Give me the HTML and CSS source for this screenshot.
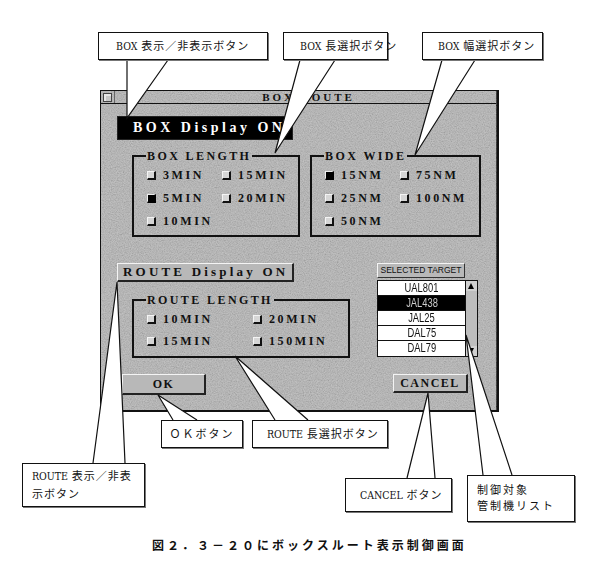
FILE: index.html
```html
<!DOCTYPE html>
<html lang="ja">
<head>
    <meta charset="UTF-8">
    <meta name="viewport" content="width=device-width, initial-scale=1.0">
    <title>BOX ROUTE</title>
    <link rel="stylesheet" href="styles.css">
</head>
<body>
<figure class="figure">
    <div class="canvas">

        <!-- BOX ROUTE window -->
        <div class="dialog">
            <svg class="grain" width="396" height="319">
                <filter id="speckle">
                    <feTurbulence type="fractalNoise" baseFrequency="0.85" numOctaves="2" seed="7"/>
                    <feColorMatrix type="matrix" values="1 0 0 0 0  1 0 0 0 0  1 0 0 0 0  0 0 0 0 0.28"/>
                </filter>
                <rect width="396" height="319" filter="url(#speckle)"/>
            </svg>

            <div class="titlebar">
                <span class="close-cell"><span class="close-box"></span></span>
                <span class="title">BOX ROUTE</span>
            </div>

            <div class="dialog-body">
                <button class="btn-display">BOX Display ON</button>

                <div class="group-row">
                    <fieldset class="group box-length">
                        <legend>BOX LENGTH</legend>
                        <div class="opts">
                            <label class="check"><span class="cb"></span>3MIN</label>
                            <label class="check"><span class="cb"></span>15MIN</label>
                            <label class="check"><span class="cb checked"></span>5MIN</label>
                            <label class="check"><span class="cb"></span>20MIN</label>
                            <label class="check"><span class="cb"></span>10MIN</label>
                        </div>
                    </fieldset>

                    <fieldset class="group box-wide">
                        <legend>BOX WIDE</legend>
                        <div class="opts">
                            <label class="check"><span class="cb checked"></span>15NM</label>
                            <label class="check"><span class="cb"></span>75NM</label>
                            <label class="check"><span class="cb"></span>25NM</label>
                            <label class="check"><span class="cb"></span>100NM</label>
                            <label class="check"><span class="cb"></span>50NM</label>
                        </div>
                    </fieldset>
                </div>

                <div class="route-row">
                    <div class="route-col">
                        <button class="btn btn-route">ROUTE Display ON</button>
                        <fieldset class="group route-length">
                            <legend>ROUTE LENGTH</legend>
                            <div class="opts">
                                <label class="check"><span class="cb"></span>10MIN</label>
                                <label class="check"><span class="cb"></span>20MIN</label>
                                <label class="check"><span class="cb"></span>15MIN</label>
                                <label class="check"><span class="cb"></span>150MIN</label>
                            </div>
                        </fieldset>
                    </div>

                    <div class="target">
                        <div class="target-head">SELECTED TARGET</div>
                        <div class="target-list">
                            <ul class="rows">
                                <li><span>UAL801</span></li>
                                <li class="sel"><span>JAL438</span></li>
                                <li><span>JAL25</span></li>
                                <li><span>DAL75</span></li>
                                <li><span>DAL79</span></li>
                            </ul>
                            <div class="scrollbar">
                                <span class="arrow up"></span>
                                <span class="track"></span>
                                <span class="arrow down"></span>
                            </div>
                        </div>
                    </div>
                </div>

                <div class="action-row">
                    <button class="btn btn-ok">OK</button>
                    <button class="btn btn-cancel">CANCEL</button>
                </div>
            </div>
        </div>

        <!-- callout pointers -->
        <svg class="pointers" width="600" height="537" viewBox="0 0 600 537">
            <g fill="#fff">
                <polygon points="127,60 168,60 127,118"/>
                <polygon points="300,60 335,60 275,153"/>
                <polygon points="442,60 475,60 415,155"/>
                <polygon points="117,282 93,463 125,463"/>
                <polygon points="158,395 173,420 197,420"/>
                <polygon points="235,356 275,420 308,420"/>
                <polygon points="428,393 407,478 435,478"/>
                <polygon points="466,335 483,475 512,475"/>
            </g>
            <g fill="none" stroke="#111" stroke-width="1.2">
                <polyline points="127,60 127,118 168,60"/>
                <polyline points="300,60 275,153 335,60"/>
                <polyline points="442,60 415,155 475,60"/>
                <polyline points="93,463 117,282 125,463"/>
                <polyline points="173,420 158,395 197,420"/>
                <polyline points="275,420 235,356 308,420"/>
                <polyline points="407,478 428,393 435,478"/>
                <polyline points="483,475 466,335 512,475"/>
            </g>
        </svg>

        <div class="callout c-box-display"><span class="lat">BOX</span> 表示／非表示ボタン</div>
        <div class="callout c-box-length"><span class="lat">BOX</span> 長選択ボタン</div>
        <div class="callout c-box-wide"><span class="lat">BOX</span> 幅選択ボタン</div>
        <div class="callout c-route-display"><span class="lat">ROUTE</span> 表示／非表<br>示ボタン</div>
        <div class="callout c-ok">ＯＫボタン</div>
        <div class="callout c-route-length"><span class="lat">ROUTE</span> 長選択ボタン</div>
        <div class="callout c-cancel"><span class="lat">CANCEL</span> ボタン</div>
        <div class="callout c-target">制御対象<br>管制機リスト</div>
    </div>

    <figcaption class="caption">図２．３－２０にボックスルート表示制御画面</figcaption>
</figure>
</body>
</html>
```

FILE: styles.css
```css
* {
    margin: 0;
    padding: 0;
    box-sizing: border-box;
}

body {
    background: #fff;
    color: #111;
    font-family: "Liberation Serif", "Noto Sans CJK JP", serif;
}

.figure {
    width: 600px;
    height: 561px;
}

.canvas {
    position: relative;
    width: 600px;
    height: 537px;
}

/* window */
.dialog {
    position: absolute;
    left: 100px;
    top: 90px;
    width: 399px;
    height: 322px;
    background: #b2b2b2;
    border: 1px solid #111;
    border-right-width: 3px;
    border-bottom-width: 2px;
    z-index: 1;
}

/* halftone speckle behind the controls */
.grain {
    position: absolute;
    left: 0;
    top: 0;
    pointer-events: none;
}

.titlebar,
.dialog-body {
    position: relative;
}

.titlebar {
    display: flex;
    height: 13px;
    border-bottom: 1px solid #111;
}

.close-cell {
    width: 14px;
    display: flex;
    align-items: center;
    justify-content: center;
    border-right: 1px solid #666;
}

.close-box {
    width: 9px;
    height: 9px;
    border: 1px solid #444;
    background: #c8c8c8;
    box-shadow: inset 2px 2px 0 #e8e8e8;
}

.title {
    flex: 1;
    text-align: center;
    font-size: 11px;
    font-weight: bold;
    line-height: 12px;
    letter-spacing: 3px;
    padding-left: 6px;
}

.dialog-body {
    padding: 12px 0 0 16px;
}

button {
    font-family: inherit;
    color: #111;
    cursor: pointer;
}

.btn-display {
    display: block;
    width: 176px;
    height: 24px;
    background: #000;
    color: #fff;
    border: 1px solid #222;
    font-size: 14px;
    font-weight: bold;
    letter-spacing: 3.5px;
    text-align: left;
    padding-left: 15px;
}

.btn {
    height: 20px;
    background: #b8b8b8;
    border: 2px solid;
    border-color: #f4f4f4 #222 #222 #f4f4f4;
    border-width: 1px 2px 2px 1px;
    font-size: 12px;
    font-weight: bold;
    letter-spacing: 1.5px;
}

.btn-route {
    display: block;
    width: 177px;
    height: 19px;
    font-size: 13px;
    letter-spacing: 3.2px;
    text-align: left;
    padding-left: 5px;
}

/* group boxes */
.group-row {
    display: flex;
    gap: 10px;
    margin: 9px 0 0 15px;
}

.group {
    min-width: 0;
    border: 2px solid #111;
    padding: 5px 6px 7px 12px;
}

.group legend {
    padding: 0 1px;
    font-size: 12px;
    font-weight: bold;
    line-height: 14px;
    letter-spacing: 2.4px;
}

.box-length {
    width: 168px;
}

.box-wide {
    width: 171px;
}

.opts {
    display: grid;
    grid-template-columns: 75px 75px;
    row-gap: 9px;
    margin-left: 1px;
}

.check {
    display: flex;
    align-items: center;
    gap: 7px;
    height: 14px;
    font-size: 12px;
    font-weight: bold;
    letter-spacing: 2.6px;
    white-space: nowrap;
}

.cb {
    flex: none;
    width: 9px;
    height: 9px;
    background: #d6d6d6;
    border: 1px solid;
    border-color: #f4f4f4 #111 #111 #f4f4f4;
    border-width: 1px 2px 2px 1px;
}

.cb.checked {
    background: #000;
    border-color: #eee #000 #000 #eee;
}

.route-row {
    display: flex;
    gap: 27px;
    margin-top: 26px;
}

.route-length {
    width: 218px;
    margin: 11px 0 0 15px;
    padding-bottom: 8px;
}

.route-length .opts {
    grid-template-columns: 106px 106px;
    row-gap: 8px;
}

/* target list */
.target-head {
    width: 88px;
    height: 15px;
    background: #b8b8b8;
    border: 1px solid;
    border-color: #f4f4f4 #333 #333 #f4f4f4;
    font-family: "Liberation Sans", sans-serif;
    font-size: 8.5px;
    line-height: 13px;
    text-align: center;
    white-space: nowrap;
    margin-bottom: 2px;
}

.target-list {
    display: flex;
    width: 101px;
    border: 1px solid #111;
    background: #fff;
}

.rows {
    list-style: none;
    width: 88px;
}

.rows li {
    height: 15px;
    border-bottom: 1px solid #111;
    text-align: center;
    font-family: "Liberation Sans", sans-serif;
    font-size: 13px;
    line-height: 14px;
}

.rows li:last-child {
    border-bottom: none;
}

.rows li span {
    display: inline-block;
    transform: scaleX(0.72);
}

.rows li.sel {
    background: #000;
    color: #ccc;
}

.scrollbar {
    display: flex;
    flex-direction: column;
    width: 12px;
    border-left: 1px solid #111;
    background: #bdbdbd;
}

.scrollbar .track {
    flex: 1;
}

.arrow {
    height: 10px;
    position: relative;
    background: #d0d0d0;
}

.arrow::after {
    content: "";
    position: absolute;
    left: 2px;
    border-left: 3.5px solid transparent;
    border-right: 3.5px solid transparent;
}

.arrow.up::after {
    top: 2px;
    border-bottom: 6px solid #000;
}

.arrow.down::after {
    top: 2px;
    border-top: 6px solid #000;
}

.action-row {
    display: flex;
    justify-content: space-between;
    margin-top: 16px;
    padding: 0 28px 0 5px;
}

.btn-ok {
    width: 84px;
    height: 21px;
}

.btn-cancel {
    width: 75px;
    height: 19px;
}

/* pointers and labels */
.pointers {
    position: absolute;
    left: 0;
    top: 0;
    z-index: 2;
}

.callout {
    position: absolute;
    z-index: 3;
    background: #fff;
    border: 1px solid #111;
    box-shadow: 1px 1px 0 #777;
    font-size: 11px;
    letter-spacing: 1px;
    line-height: 26px;
    white-space: nowrap;
}

.callout .lat {
    font-family: "DejaVu Serif Condensed", "DejaVu Serif", serif;
    font-stretch: condensed;
    font-size: 10.5px;
    letter-spacing: 0;
}

.c-box-display {
    left: 98px;
    top: 32px;
    width: 170px;
    height: 28px;
    padding-left: 17px;
}

.c-box-length {
    left: 283px;
    top: 32px;
    width: 105px;
    height: 28px;
    padding-left: 16px;
}

.c-box-wide {
    left: 422px;
    top: 32px;
    width: 121px;
    height: 28px;
    padding-left: 15px;
}

.c-route-display {
    left: 22px;
    top: 463px;
    width: 123px;
    height: 44px;
    padding: 3px 0 0 9px;
    line-height: 18px;
}

.c-ok {
    left: 161px;
    top: 420px;
    width: 82px;
    height: 28px;
    text-align: center;
    letter-spacing: 2px;
}

.c-route-length {
    left: 252px;
    top: 420px;
    width: 136px;
    height: 28px;
    padding-left: 14px;
}

.c-cancel {
    left: 345px;
    top: 478px;
    width: 107px;
    height: 34px;
    padding-left: 14px;
    line-height: 32px;
}

.c-target {
    left: 467px;
    top: 475px;
    width: 108px;
    height: 47px;
    padding: 6px 0 0 9px;
    line-height: 16px;
    letter-spacing: 2px;
}

.caption {
    padding-left: 152px;
    font-family: "Noto Sans CJK JP", sans-serif;
    font-size: 12px;
    font-weight: bold;
    line-height: 16px;
    letter-spacing: 3px;
}
```
